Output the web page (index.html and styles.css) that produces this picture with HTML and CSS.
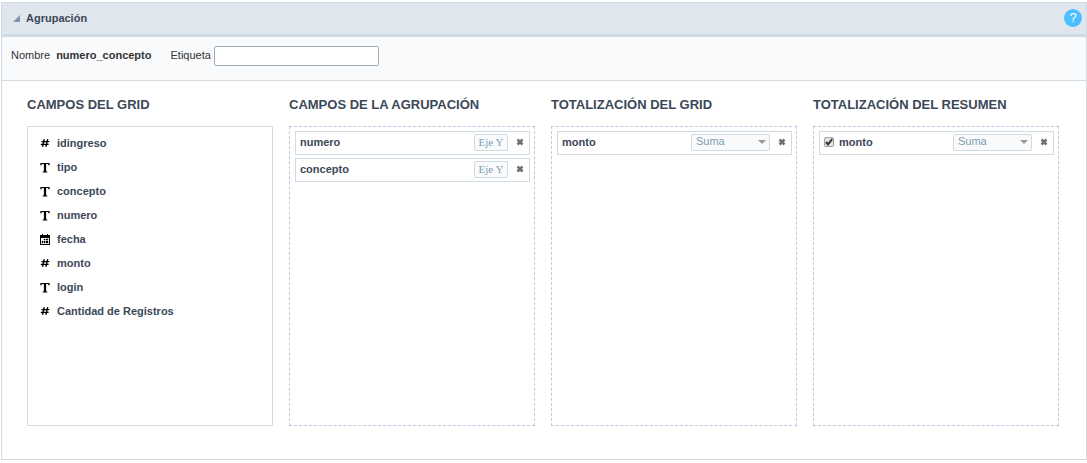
FILE: index.html
```html
<!DOCTYPE html>
<html lang="es">
<head>
  <meta charset="UTF-8" />
  <meta name="viewport" content="width=device-width, initial-scale=1.0"/>
  <title>Agrupación</title>
  <link rel="stylesheet" href="styles.css">
</head>
<body>

  <!-- Shared icons -->
  <svg class="sprite" aria-hidden="true">
    <symbol id="icon-number" viewBox="0 0 12 12">
      <path d="M5.3 2.2L3.5 9.8M8.7 2.2L6.9 9.8M2.4 4.6H10.2M1.8 7.4H9.6" fill="none" stroke="#000" stroke-width="1.4"/>
    </symbol>
    <symbol id="icon-text" viewBox="0 0 12 12">
      <path d="M1.4 2H10.6V4.4H9.8Q9.5 3 8 3H7.1V10Q7.1 10.6 8.4 10.7V11.4H3.6V10.7Q4.9 10.6 4.9 10V3H4Q2.5 3 2.2 4.4H1.4Z"/>
    </symbol>
    <symbol id="icon-date" viewBox="0 0 12 12">
      <path fill-rule="evenodd" d="M1 2H3V1H4V2H8V1H9V2H11V12H1ZM2 5V11H10V5Z"/>
      <path d="M5 6H6V7H5ZM7 6H9V7H7ZM3 8H4V10H3ZM5 8H6V10H5ZM7 8H9V10H7Z" stroke="#000" stroke-width=".4"/>
    </symbol>
    <symbol id="icon-remove" viewBox="0 0 8 8">
      <path d="M1.5 1.5L6.5 6.5M6.5 1.5L1.5 6.5" fill="none" stroke="#707070" stroke-width="2.6"/>
    </symbol>
  </svg>

  <section class="panel">
    <header class="panel-header">
      <svg class="toggle" viewBox="0 0 8 8"><path d="M8 0V8H0Z"/></svg>
      <h1>Agrupación</h1>
      <button type="button" class="help" aria-label="Ayuda">?</button>
    </header>

    <div class="toolbar">
      <span>Nombre</span>
      <strong>numero_concepto</strong>
      <label for="etiqueta">Etiqueta</label>
      <input type="text" id="etiqueta">
    </div>

    <div class="columns">
      <div class="column">
        <h2>CAMPOS DEL GRID</h2>
        <ul class="box fields">
          <li><svg><use href="#icon-number"/></svg>idingreso</li>
          <li><svg><use href="#icon-text"/></svg>tipo</li>
          <li><svg><use href="#icon-text"/></svg>concepto</li>
          <li><svg><use href="#icon-text"/></svg>numero</li>
          <li><svg><use href="#icon-date"/></svg>fecha</li>
          <li><svg><use href="#icon-number"/></svg>monto</li>
          <li><svg><use href="#icon-text"/></svg>login</li>
          <li><svg><use href="#icon-number"/></svg>Cantidad de Registros</li>
        </ul>
      </div>

      <div class="column">
        <h2>CAMPOS DE LA AGRUPACIÓN</h2>
        <ul class="box drop">
          <li class="item">
            <span class="name">numero</span>
            <button type="button" class="axis">Eje Y</button>
            <button type="button" class="remove" aria-label="Quitar numero"><svg><use href="#icon-remove"/></svg></button>
          </li>
          <li class="item">
            <span class="name">concepto</span>
            <button type="button" class="axis">Eje Y</button>
            <button type="button" class="remove" aria-label="Quitar concepto"><svg><use href="#icon-remove"/></svg></button>
          </li>
        </ul>
      </div>

      <div class="column">
        <h2>TOTALIZACIÓN DEL GRID</h2>
        <ul class="box drop">
          <li class="item">
            <label class="name" for="total-grid">monto</label>
            <span class="select">
              <select id="total-grid"><option>Suma</option></select>
              <svg viewBox="0 0 8 4"><path d="M0 0H8L4 4Z"/></svg>
            </span>
            <button type="button" class="remove" aria-label="Quitar monto"><svg><use href="#icon-remove"/></svg></button>
          </li>
        </ul>
      </div>

      <div class="column">
        <h2>TOTALIZACIÓN DEL RESUMEN</h2>
        <ul class="box drop">
          <li class="item">
            <span class="check">
              <input type="checkbox" id="resumen-monto" checked>
              <svg viewBox="0 0 10 10"><path d="M2 5L4 7.4L8.2 2.2"/></svg>
            </span>
            <label class="name" for="resumen-monto">monto</label>
            <span class="select">
              <select aria-label="Total de monto"><option>Suma</option></select>
              <svg viewBox="0 0 8 4"><path d="M0 0H8L4 4Z"/></svg>
            </span>
            <button type="button" class="remove" aria-label="Quitar monto"><svg><use href="#icon-remove"/></svg></button>
          </li>
        </ul>
      </div>
    </div>
  </section>

</body>
</html>
```

FILE: styles.css
```css
* {
  margin: 0;
  padding: 0;
  box-sizing: border-box;
}

body {
  background-color: #ffffff;
  color: #3c4858;
  font-family: "Liberation Sans", Arial, sans-serif;
  font-size: 11px;
  padding: 2px 0 2px 1px;
}

button,
input,
select {
  font-family: inherit;
  font-size: 11px;
}

button {
  cursor: pointer;
}

ul {
  list-style: none;
}

.sprite {
  display: none;
}

.panel {
  border: 1px solid #d0dce2;
}

.panel-header {
  display: flex;
  align-items: center;
  height: 34px;
  padding: 0 4px 1px 11px;
  background-color: #dfe6ed;
  border-bottom: 3px solid #d0dce2;
}

.panel-header h1 {
  flex: 1;
  font-size: 11px;
}

.toggle {
  width: 7px;
  height: 7px;
  margin-right: 6px;
  fill: #8492a6;
}

.help {
  width: 18px;
  height: 18px;
  border: none;
  border-radius: 50%;
  background-color: #4cbfff;
  color: #ffffff;
  font-size: 13px;
  line-height: 18px;
}

.toolbar {
  display: flex;
  align-items: flex-start;
  height: 44px;
  padding: 9px;
  background-color: #f9fafc;
  border-bottom: 1px solid #d0dce2;
  color: #333333;
  line-height: 19px;
}

.toolbar strong {
  margin: 0 19px 0 6px;
}

.toolbar input {
  width: 165px;
  height: 20px;
  margin-left: 3px;
  padding: 0 4px;
  border: 1px solid #a3adba;
  border-radius: 2px;
  background-color: #ffffff;
}

.columns {
  display: grid;
  grid-template-columns: repeat(4, 1fr);
  gap: 16px;
  padding: 16px 27px 33px 25px;
}

.column h2 {
  margin-bottom: 13px;
  font-size: 13px;
  line-height: 16px;
  white-space: nowrap;
}

.box {
  min-height: 300px;
  border: 1px solid #d0dce2;
}

.fields {
  padding: 4px 11px;
  font-weight: bold;
}

.fields li {
  display: flex;
  align-items: center;
  line-height: 24px;
}

.fields svg {
  width: 12px;
  height: 12px;
  margin-right: 6px;
}

.drop {
  display: flex;
  flex-direction: column;
  gap: 3px;
  padding: 4px 4px 4px 5px;
  border: 1px dashed #c0c8e0;
}

.item {
  display: flex;
  align-items: center;
  height: 24px;
  padding: 0 5px 2px 4px;
  border: 1px solid #d0dce2;
}

.name {
  flex: 1;
  font-weight: bold;
}

.axis,
.select select {
  height: 17px;
  border: 1px solid #d0dce2;
  border-radius: 2px;
  background-color: #f9fafc;
  color: #7c9eb2;
}

.axis {
  width: 34px;
  font-family: "Liberation Serif", "Times New Roman", serif;
  line-height: 14px;
}

.select {
  position: relative;
  display: flex;
}

.select select {
  width: 79px;
  padding: 0 16px 2px 4px;
  appearance: none;
}

.select svg {
  position: absolute;
  top: 6px;
  right: 4px;
  width: 8px;
  height: 4px;
  fill: #999999;
  pointer-events: none;
}

.remove {
  display: flex;
  margin-left: 8px;
  border: none;
  background: none;
}

.remove svg {
  width: 8px;
  height: 8px;
}

.check {
  position: relative;
  display: flex;
  margin-right: 5px;
}

.check input {
  width: 10px;
  height: 10px;
  border: 1px solid #a0a0a0;
  border-radius: 2px;
  background-color: #e4e4e4;
  appearance: none;
}

.check svg {
  position: absolute;
  inset: 0;
  fill: none;
  stroke: #333333;
  stroke-width: 2;
  pointer-events: none;
}
```
